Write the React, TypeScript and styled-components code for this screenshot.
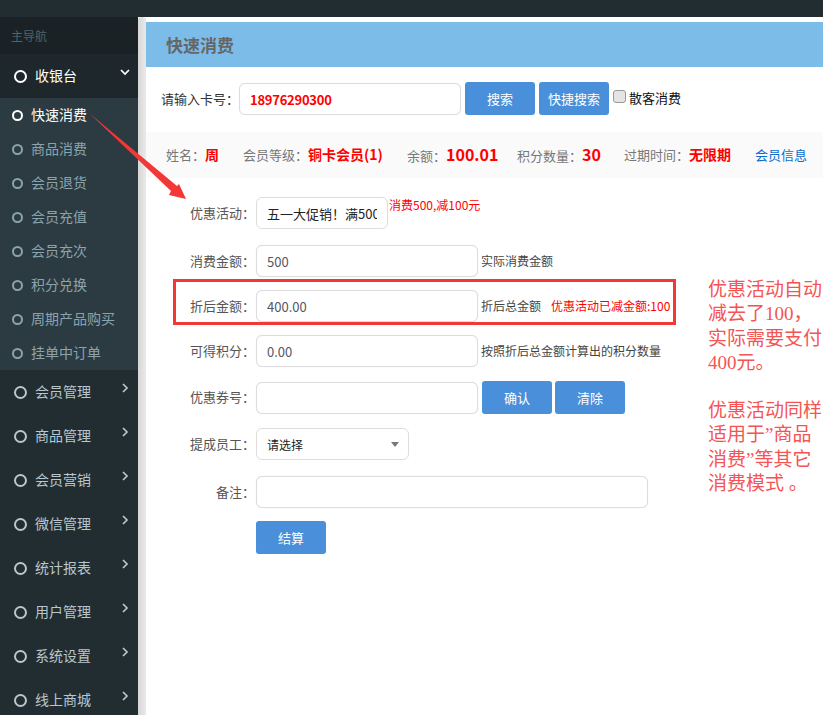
import React from "react";
import styled, { createGlobalStyle } from "styled-components";

const GlobalStyle = createGlobalStyle`
  html, body {
    margin: 0;
    padding: 0;
    background: #fff;
  }
  body {
    font-family: "Noto Sans CJK SC", "Liberation Sans", sans-serif;
    overflow: hidden;
  }
  * {
    box-sizing: border-box;
  }
`;

const Page = styled.div`
  position: relative;
  width: 823px;
  height: 715px;
  overflow: hidden;
  background: #fff;
`;

const TopBar = styled.div`
  height: 17px;
  background: #222d32;
`;

const Body = styled.div`
  display: flex;
  height: 698px;
`;

const Sidebar = styled.aside`
  width: 138px;
  flex: none;
  background: #222d32;
`;

const NavTitle = styled.div`
  height: 37px;
  padding: 0 11px 1px;
  display: flex;
  align-items: center;
  font-size: 12px;
  color: #4b646f;
  background: #1a2226;
`;

const MenuRow = styled.div<{ $open?: boolean }>`
  position: relative;
  height: 44px;
  padding-left: 14px;
  display: flex;
  align-items: center;
  gap: 8px;
  font-size: 14px;
  color: ${({ $open }) => ($open ? "#fff" : "#b8c7ce")};
  background: ${({ $open }) => ($open ? "#1e282c" : "transparent")};
`;

const RowText = styled.span`
  margin-bottom: 2px;
`;

const Ring = styled.span<{ $size: number; $color: string }>`
  width: ${({ $size }) => $size}px;
  height: ${({ $size }) => $size}px;
  flex: none;
  border-radius: 50%;
  border: 2.5px solid ${({ $color }) => $color};
`;

const Chevron = styled.svg`
  position: absolute;
  left: 120px;
  top: 13px;
  width: 10px;
  height: 10px;
  fill: none;
  stroke: currentColor;
  stroke-width: 1.7;
`;

const SubMenu = styled.div`
  background: #2c3b41;
`;

const SubRow = styled.div<{ $active?: boolean }>`
  height: 34px;
  padding-left: 12px;
  display: flex;
  align-items: center;
  gap: 8px;
  font-size: 14px;
  color: ${({ $active }) => ($active ? "#fff" : "#8aa4af")};
`;

const Gutter = styled.div`
  width: 8px;
  flex: none;
  background: linear-gradient(90deg, #d6d6d6, #eaeaea);
  border-radius: 3px 3px 0 0;
`;

const Main = styled.main`
  flex: 1;
  min-width: 0;
  padding-top: 5px;
`;

const Header = styled.div`
  height: 45px;
  padding-left: 20px;
  display: flex;
  align-items: center;
  background: #7cbce8;
  color: #666;
  font-size: 17px;
  font-weight: 700;
`;

const SearchRow = styled.div`
  margin-top: 15px;
  padding-left: 15px;
  height: 33px;
  display: flex;
  align-items: flex-end;
  font-size: 13px;
  color: #333;
`;

const SearchLabel = styled.span`
  width: 78px;
  flex: none;
  white-space: nowrap;
  align-self: center;
`;

const Field = styled.input<{ $width?: number; $strong?: boolean }>`
  width: ${({ $width }) => $width ?? 222}px;
  height: 32px;
  flex: none;
  padding: 0 10px;
  border: 1px solid #ddd;
  border-radius: 6px;
  outline: none;
  background: #fff;
  font-family: inherit;
  font-size: 13px;
  letter-spacing: ${({ $strong }) => ($strong ? "-0.25px" : "0")};
  color: ${({ $strong }) => ($strong ? "#f00" : "#556")};
  font-weight: ${({ $strong }) => ($strong ? 700 : 400)};
  box-shadow: 0 0 1px #e4e4e4;
`;

const Button = styled.button<{ $left?: number }>`
  width: 70px;
  height: 33px;
  flex: none;
  margin-left: ${({ $left }) => $left ?? 0}px;
  padding: 0;
  border: 0;
  border-radius: 3px;
  background: #4a8fd9;
  color: #fff;
  font-family: inherit;
  font-size: 13px;
`;

const Check = styled.input`
  appearance: none;
  width: 13px;
  height: 13px;
  flex: none;
  align-self: flex-start;
  margin: 8px 0 0 4px;
  border: 1px solid #999;
  border-radius: 3px;
  background: #e4e4e4;
`;

const CheckText = styled.span`
  align-self: flex-start;
  margin: 6px 0 0 3px;
  color: #111;
`;

const InfoBar = styled.div`
  margin-top: 17px;
  height: 46px;
  padding: 0 0 2px 20px;
  display: flex;
  align-items: center;
  background: #fafafa;
  font-size: 13px;
  color: #777;
`;

const InfoItem = styled.span<{ $width: number }>`
  width: ${({ $width }) => $width}px;
  flex: none;
  white-space: nowrap;
`;

const InfoValue = styled.b<{ $big?: boolean }>`
  color: #f00;
  font-size: ${({ $big }) => ($big ? 16 : 14)}px;
`;

const InfoLink = styled.a`
  color: #0a6ccf;
  text-decoration: none;
`;

const Form = styled.div`
  padding-top: 19px;
`;

const FormRow = styled.div<{ $gap: number }>`
  display: flex;
  align-items: center;
  min-height: 32px;
  margin-top: ${({ $gap }) => $gap}px;
`;

const Label = styled.label`
  width: 109px;
  flex: none;
  margin-right: 1px;
  padding-bottom: 2px;
  text-align: right;
  font-size: 13px;
  color: #555;
  white-space: nowrap;
`;

const Hint = styled.span`
  margin-left: 3px;
  padding-bottom: 1px;
  font-size: 12px;
  color: #444;
  white-space: nowrap;
`;

const RedHint = styled.span`
  margin-left: 10px;
  padding-bottom: 1px;
  font-size: 12px;
  color: #f00;
  white-space: nowrap;
`;

const PromoNote = styled.span`
  align-self: flex-start;
  margin: -1px 0 0 1px;
  font-size: 12px;
  color: #f00;
  white-space: nowrap;
`;

const PickerBox = styled.div<{ $width: number }>`
  position: relative;
  width: ${({ $width }) => $width}px;
  height: 32px;
  flex: none;
`;

const Picker = styled.select<{ $size: number }>`
  appearance: none;
  width: 100%;
  height: 100%;
  padding: 0 10px;
  border: 1px solid #ddd;
  border-radius: 6px;
  outline: none;
  background: #fff;
  font-family: inherit;
  font-size: ${({ $size }) => $size}px;
  color: #222;
`;

const Caret = styled.span`
  position: absolute;
  right: 10px;
  top: 14px;
  border-left: 4px solid transparent;
  border-right: 4px solid transparent;
  border-top: 5px solid #777;
`;

const ButtonSlot = styled.div`
  margin-left: 110px;
`;

const HighlightBox = styled.div`
  position: absolute;
  left: 173px;
  top: 279px;
  width: 503px;
  height: 46px;
  border: 3px solid #f33737;
  pointer-events: none;
`;

const ArrowMark = styled.svg`
  position: absolute;
  left: 0;
  top: 0;
  width: 823px;
  height: 715px;
  fill: #f33737;
  pointer-events: none;
`;

const Annotation = styled.div`
  position: absolute;
  left: 708px;
  top: 278px;
  width: 115px;
  font-family: "Liberation Serif", "Noto Sans CJK SC", serif;
  font-size: 19px;
  line-height: 24.3px;
  color: #f55454;
  white-space: nowrap;
`;

const AnnotationGap = styled.div`
  height: 24px;
`;

const subItems = ["商品消费", "会员退货", "会员充值", "会员充次", "积分兑换", "周期产品购买", "挂单中订单"];
const menuItems = ["会员管理", "商品管理", "会员营销", "微信管理", "统计报表", "用户管理", "系统设置", "线上商城"];

const App = () => (
  <Page>
    <GlobalStyle />
    <TopBar />
    <Body>
      <Sidebar>
        <NavTitle>主导航</NavTitle>
        <MenuRow $open>
          <Ring $size={13} $color="#fff" />
          <RowText>收银台</RowText>
          <Chevron viewBox="0 0 10 10">
            <path d="M1 3l4 4 4-4" />
          </Chevron>
        </MenuRow>
        <SubMenu>
          <SubRow $active>
            <Ring $size={11} $color="#fff" />
            <RowText>快速消费</RowText>
          </SubRow>
          {subItems.map((item) => (
            <SubRow key={item}>
              <Ring $size={11} $color="#8aa4af" />
              <RowText>{item}</RowText>
            </SubRow>
          ))}
        </SubMenu>
        {menuItems.map((item) => (
          <MenuRow key={item}>
            <Ring $size={13} $color="#b8c7ce" />
            <RowText>{item}</RowText>
            <Chevron viewBox="0 0 10 10">
              <path d="M3 1l4 4-4 4" />
            </Chevron>
          </MenuRow>
        ))}
      </Sidebar>
      <Gutter />
      <Main>
        <Header>快速消费</Header>
        <SearchRow>
          <SearchLabel>请输入卡号：</SearchLabel>
          <Field $strong defaultValue="18976290300" readOnly />
          <Button $left={4}>搜索</Button>
          <Button $left={4}>快捷搜索</Button>
          <Check type="checkbox" />
          <CheckText>散客消费</CheckText>
        </SearchRow>
        <InfoBar>
          <InfoItem $width={77}>
            姓名：<InfoValue>周</InfoValue>
          </InfoItem>
          <InfoItem $width={164}>
            会员等级：<InfoValue>铜卡会员(1)</InfoValue>
          </InfoItem>
          <InfoItem $width={110}>
            余额：<InfoValue $big>100.01</InfoValue>
          </InfoItem>
          <InfoItem $width={107}>
            积分数量：<InfoValue $big>30</InfoValue>
          </InfoItem>
          <InfoItem $width={131}>
            过期时间：<InfoValue>无限期</InfoValue>
          </InfoItem>
          <InfoLink href="#">会员信息</InfoLink>
        </InfoBar>
        <Form>
          <FormRow $gap={0}>
            <Label>优惠活动：</Label>
            <PickerBox $width={132}>
              <Picker $size={13}>
                <option>五一大促销！满500减100</option>
              </Picker>
            </PickerBox>
            <PromoNote>消费500,减100元</PromoNote>
          </FormRow>
          <FormRow $gap={16}>
            <Label>消费金额：</Label>
            <Field defaultValue="500" readOnly />
            <Hint>实际消费金额</Hint>
          </FormRow>
          <FormRow $gap={13}>
            <Label>折后金额：</Label>
            <Field defaultValue="400.00" readOnly />
            <Hint>折后总金额</Hint>
            <RedHint>优惠活动已减金额:100</RedHint>
          </FormRow>
          <FormRow $gap={13}>
            <Label>可得积分：</Label>
            <Field defaultValue="0.00" readOnly />
            <Hint>按照折后总金额计算出的积分数量</Hint>
          </FormRow>
          <FormRow $gap={14}>
            <Label>优惠券号：</Label>
            <Field />
            <Button $left={4}>确认</Button>
            <Button $left={3}>清除</Button>
          </FormRow>
          <FormRow $gap={14}>
            <Label>提成员工：</Label>
            <PickerBox $width={153}>
              <Picker $size={12}>
                <option>请选择</option>
              </Picker>
              <Caret />
            </PickerBox>
          </FormRow>
          <FormRow $gap={16}>
            <Label>备注：</Label>
            <Field $width={392} />
          </FormRow>
          <FormRow $gap={13}>
            <ButtonSlot>
              <Button>结算</Button>
            </ButtonSlot>
          </FormRow>
        </Form>
      </Main>
    </Body>
    <HighlightBox />
    <ArrowMark viewBox="0 0 823 715">
      <polygon points="89,113 177,186 179,184 186,199 169,195 171,191" />
    </ArrowMark>
    <Annotation>
      <div>优惠活动自动</div>
      <div>减去了100，</div>
      <div>实际需要支付</div>
      <div>400元。</div>
      <AnnotationGap />
      <div>优惠活动同样</div>
      <div>适用于”商品</div>
      <div>消费”等其它</div>
      <div>消费模式 。</div>
    </Annotation>
  </Page>
);

export default App;
